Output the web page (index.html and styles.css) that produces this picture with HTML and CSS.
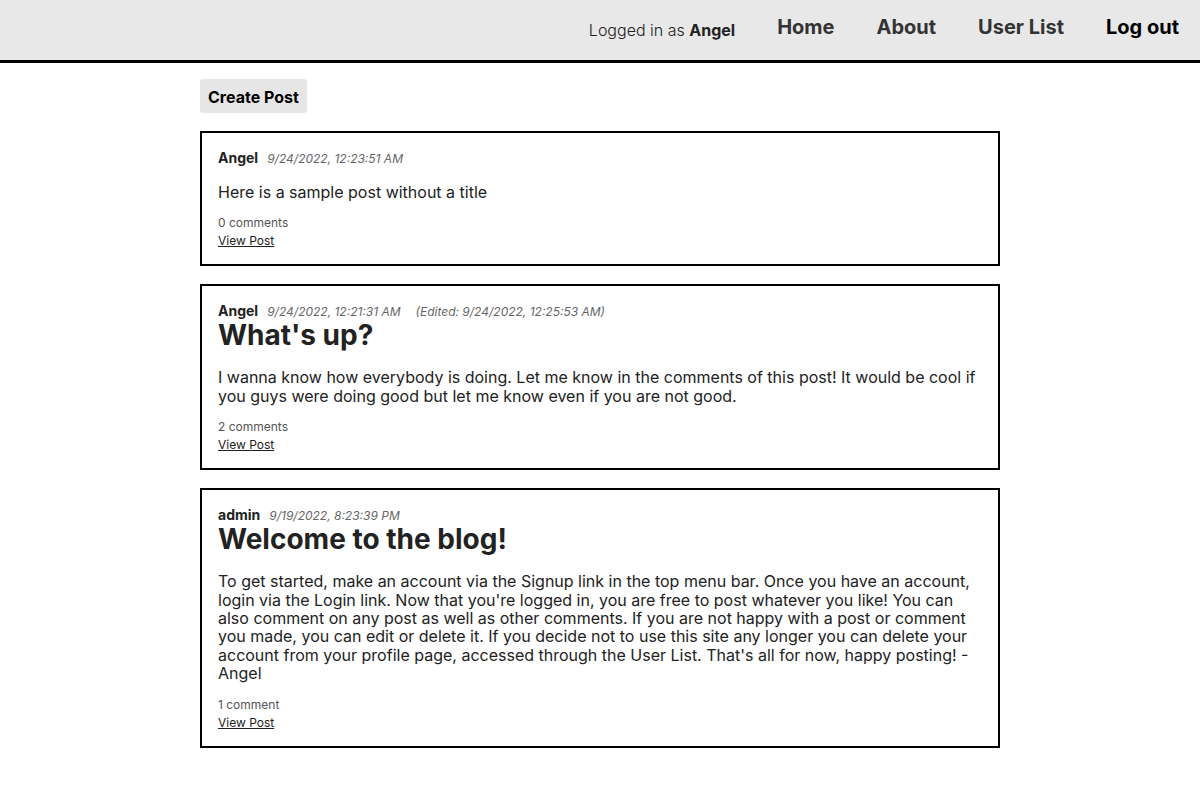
FILE: index.html
```html
<!DOCTYPE html>
<html>
<head>
<meta charset="utf-8">
<link rel="stylesheet" href="styles.css">
</head>
<body>
<header class="topbar">
  <nav class="nav">
    <span class="logged">Logged in as <b>Angel</b></span>
    <a class="nav-link" href="#">Home</a>
    <a class="nav-link" href="#">About</a>
    <a class="nav-link" href="#">User List</a>
    <a class="nav-link logout" href="#">Log out</a>
  </nav>
</header>
<main class="main">
  <button class="create">Create Post</button>
  <article class="post">
    <div class="meta"><span class="author">Angel</span><span class="date">9/24/2022, 12:23:51 AM</span></div>
    <p class="content">Here is a sample post without a title</p>
    <div class="count">0 comments</div>
    <a class="view" href="#">View Post</a>
  </article>
  <article class="post">
    <div class="meta"><span class="author">Angel</span><span class="date">9/24/2022, 12:21:31 AM</span><span class="edited">(Edited: 9/24/2022, 12:25:53 AM)</span></div>
    <h2 class="title">What's up?</h2>
    <p class="content">I wanna know how everybody is doing. Let me know in the comments of this post! It would be cool if you guys were doing good but let me know even if you are not good.</p>
    <div class="count">2 comments</div>
    <a class="view" href="#">View Post</a>
  </article>
  <article class="post">
    <div class="meta"><span class="author">admin</span><span class="date">9/19/2022, 8:23:39 PM</span></div>
    <h2 class="title">Welcome to the blog!</h2>
    <p class="content">To get started, make an account via the Signup link in the top menu bar. Once you have an account, login via the Login link. Now that you're logged in, you are free to post whatever you like! You can also comment on any post as well as other comments. If you are not happy with a post or comment you made, you can edit or delete it. If you decide not to use this site any longer you can delete your account from your profile page, accessed through the User List. That's all for now, happy posting! - Angel</p>
    <div class="count">1 comment</div>
    <a class="view" href="#">View Post</a>
  </article>
</main>
</body>
</html>
```

FILE: styles.css
```css
* { box-sizing: border-box; }
body {
  margin: 0;
  font-family: Inter, "Noto Sans", sans-serif;
  color: #222;
  background: #fff;
}
.topbar {
  background: #e8e8e8;
  height: 63px;
  border-bottom: 3px solid #000;
}
.nav {
  display: flex;
  justify-content: flex-end;
  align-items: center;
  gap: 42px;
  height: 54px;
  padding-right: 21px;
}
.logged {
  font-size: 16px;
  font-weight: 300;
  color: #222;
  margin-top: 6px;
}
.logged b { font-weight: 700; }
.nav-link {
  font-size: 20px;
  font-weight: 700;
  color: #333;
  text-decoration: none;
}
.nav-link.logout { color: #000; }
.main {
  width: 800px;
  margin: 16px auto 40px;
  display: flex;
  flex-direction: column;
  align-items: stretch;
  gap: 18px;
}
.create {
  align-self: flex-start;
  font-family: inherit;
  font-size: 16px;
  font-weight: 700;
  color: #000;
  background: #e6e6e6;
  border: none;
  border-radius: 3px;
  padding: 8px 8px;
  height: 34px;
}
.post {
  border: 2px solid #000;
  padding: 16px 16px 14px;
  display: flex;
  flex-direction: column;
  align-items: flex-start;
}
.meta {
  display: flex;
  align-items: baseline;
  gap: 9px;
  line-height: 18px;
}
.author {
  font-size: 14px;
  font-weight: 700;
  color: #222;
}
.date, .edited {
  font-size: 12px;
  font-style: italic;
  color: #666;
}
.edited { margin-left: 6px; }
.title {
  font-size: 28px;
  font-weight: 700;
  margin: 0 0 4px;
  line-height: 28px;
  color: #222;
}
.content {
  font-size: 16px;
  line-height: 18.4px;
  margin: 15px 0 13px;
}
.count {
  font-size: 12px;
  color: #555;
  line-height: 18px;
}
.view {
  font-size: 12px;
  color: #222;
  line-height: 18px;
}
```
